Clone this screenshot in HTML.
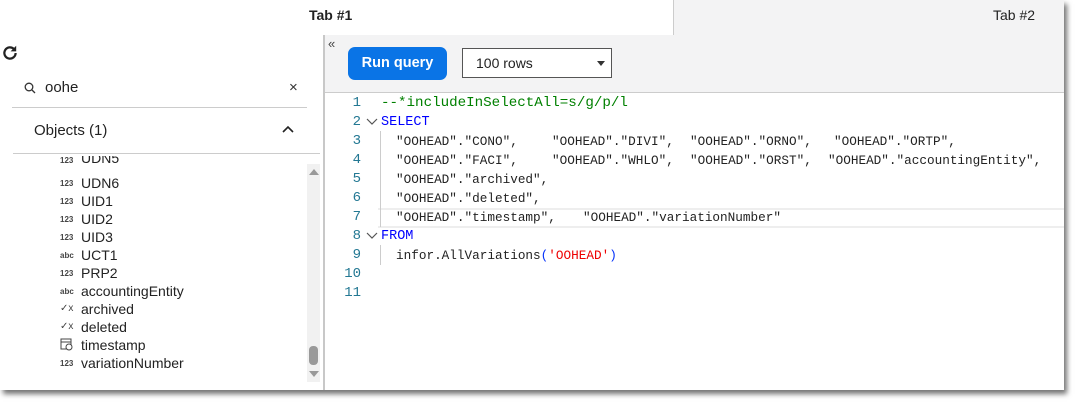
<!DOCTYPE html>
<html><head><style>
*{margin:0;padding:0;box-sizing:border-box}
body{width:1076px;height:402px;background:#fff;font-family:"Liberation Sans",sans-serif;position:relative;overflow:hidden;color:#222}
.abs{position:absolute}
.frame{left:0;top:0;width:1064px;height:390px;background:#fff;box-shadow:3px 4px 5px rgba(0,0,0,.55)}
.code{font-family:"Liberation Mono",monospace;font-size:12.7px;color:#222;white-space:pre;line-height:19px}
.ln{width:30px;text-align:right;color:#237893;font-family:"Liberation Mono",monospace;font-size:14px}
.item{left:81px;font-size:14px;color:#222}
.ic{left:60px;font-size:8px;color:#444;font-weight:bold}
</style></head><body>
<div class="abs frame"></div>
<div class="abs" style="left:673px;top:0;width:391px;height:35px;background:#f3f3f4;border-left:1px solid #ccc"></div>
<div class="abs" style="left:309px;top:7px;font-size:14px;font-weight:bold">Tab #1</div>
<div class="abs" style="left:993px;top:7px;font-size:14px">Tab #2</div>
<div class="abs" style="left:324px;top:35px;width:740px;height:58px;background:#f3f3f4;border-bottom:1px solid #ccc"></div>
<div class="abs" style="left:323px;top:35px;width:2px;height:355px;background:#c8c8c8"></div>
<div class="abs" style="left:328px;top:36px;font-size:13px;color:#444">«</div>
<div class="abs" style="left:348px;top:47px;width:99px;height:33px;background:#0a74e6;border-radius:7px;color:#fff;font-weight:bold;font-size:14.5px;text-align:center;line-height:33px">Run query</div>
<div class="abs" style="left:462px;top:48px;width:150px;height:30px;border:1px solid #555;background:#fff;font-size:14px;line-height:28px;padding-left:13px">100 rows</div>
<div class="abs" style="left:597px;top:61px;width:0;height:0;border-left:4px solid transparent;border-right:4px solid transparent;border-top:5px solid #333"></div>
<svg class="abs" style="left:1px;top:44px" width="18" height="18" viewBox="0 0 16 16"><path d="M13 8a5 5 0 1 1-1.5-3.6" fill="none" stroke="#222" stroke-width="2"/><path d="M13.5 1.5v5h-5z" fill="#222"/></svg>
<svg class="abs" style="left:24px;top:82px" width="12" height="12" viewBox="0 0 12 12"><circle cx="5" cy="5" r="3.8" fill="none" stroke="#333" stroke-width="1.3"/><path d="M8 8l3 3" stroke="#333" stroke-width="1.3"/></svg>
<div class="abs" style="left:45px;top:79px;font-size:15px">oohe</div>
<div class="abs" style="left:289px;top:79px;font-size:15px;color:#333">×</div>
<div class="abs" style="left:12px;top:107px;width:295px;height:1px;background:#ccc"></div>
<div class="abs" style="left:34px;top:122px;font-size:15px">Objects (1)</div>
<svg class="abs" style="left:282px;top:125px" width="12" height="8" viewBox="0 0 12 8"><path d="M1 7l5-5 5 5" fill="none" stroke="#222" stroke-width="1.6"/></svg>
<div class="abs" style="left:13px;top:153px;width:307px;height:1px;background:#ccc"></div>
<div class="abs" style="left:0;top:156px;width:307px;height:11px;overflow:hidden">
<div class="abs ic" style="top:0px">123</div><div class="abs item" style="top:-6px">UDN5</div></div>
<div class="abs ic" style="top:179px">123</div><div class="abs item" style="top:175px">UDN6</div>
<div class="abs ic" style="top:197px">123</div><div class="abs item" style="top:193px">UID1</div>
<div class="abs ic" style="top:215px">123</div><div class="abs item" style="top:211px">UID2</div>
<div class="abs ic" style="top:233px">123</div><div class="abs item" style="top:229px">UID3</div>
<div class="abs ic" style="top:251px">abc</div><div class="abs item" style="top:247px">UCT1</div>
<div class="abs ic" style="top:269px">123</div><div class="abs item" style="top:265px">PRP2</div>
<div class="abs ic" style="top:287px">abc</div><div class="abs item" style="top:283px">accountingEntity</div>
<div class="abs ic" style="top:303px;font-size:10px;font-weight:normal">✓x</div><div class="abs item" style="top:301px">archived</div>
<div class="abs ic" style="top:321px;font-size:10px;font-weight:normal">✓x</div><div class="abs item" style="top:319px">deleted</div>
<svg class="abs" style="left:60px;top:338px" width="13" height="13" viewBox="0 0 13 13"><rect x="1" y="1" width="10" height="10" fill="none" stroke="#444"/><path d="M1 4h10" stroke="#444"/><circle cx="9" cy="9" r="3" fill="#fff" stroke="#444"/></svg><div class="abs item" style="top:337px">timestamp</div>
<div class="abs ic" style="top:359px">123</div><div class="abs item" style="top:355px">variationNumber</div>
<div class="abs" style="left:307px;top:164px;width:13px;height:218px;background:#f1f1f1"></div>
<div class="abs" style="left:309px;top:169px;border-left:5px solid transparent;border-right:5px solid transparent;border-bottom:6px solid #999"></div>
<div class="abs" style="left:309px;top:371px;border-left:5px solid transparent;border-right:5px solid transparent;border-top:6px solid #999"></div>
<div class="abs" style="left:309px;top:346px;width:9px;height:19px;background:#999;border-radius:4px"></div>
<div class="abs" style="left:378px;top:208px;width:686px;height:20px;border-top:2px solid #eee;border-bottom:2px solid #eee"></div>
<div class="abs" style="left:380px;top:131px;width:1px;height:96px;background:#ccc"></div>
<div class="abs" style="left:380px;top:245px;width:1px;height:20px;background:#ccc"></div>
<div class="abs ln" style="left:331px;top:95px">1</div>
<div class="abs ln" style="left:331px;top:114px">2</div>
<div class="abs ln" style="left:331px;top:133px">3</div>
<div class="abs ln" style="left:331px;top:152px">4</div>
<div class="abs ln" style="left:331px;top:171px">5</div>
<div class="abs ln" style="left:331px;top:190px">6</div>
<div class="abs ln" style="left:331px;top:209px">7</div>
<div class="abs ln" style="left:331px;top:228px">8</div>
<div class="abs ln" style="left:331px;top:247px">9</div>
<div class="abs ln" style="left:331px;top:266px">10</div>
<div class="abs ln" style="left:331px;top:285px">11</div>
<svg class="abs" style="left:366px;top:118px" width="12" height="8"><path d="M1 1l5 5 5-5" fill="none" stroke="#555" stroke-width="1.2"/></svg>
<svg class="abs" style="left:366px;top:232px" width="12" height="8"><path d="M1 1l5 5 5-5" fill="none" stroke="#555" stroke-width="1.2"/></svg>
<div class="abs code" style="left:381px;top:94px;color:#008000;font-size:14.2px">--*includeInSelectAll=s/g/p/l</div>
<div class="abs code" style="left:381px;top:113px;color:#0000ff;font-size:13.5px">SELECT</div>
<div class="abs code" style="left:396px;top:132px">"OOHEAD"."CONO",</div>
<div class="abs code" style="left:552px;top:132px">"OOHEAD"."DIVI",</div>
<div class="abs code" style="left:690px;top:132px">"OOHEAD"."ORNO",</div>
<div class="abs code" style="left:834px;top:132px">"OOHEAD"."ORTP",</div>
<div class="abs code" style="left:396px;top:151px">"OOHEAD"."FACI",</div>
<div class="abs code" style="left:552px;top:151px">"OOHEAD"."WHLO",</div>
<div class="abs code" style="left:690px;top:151px">"OOHEAD"."ORST",</div>
<div class="abs code" style="left:828px;top:151px">"OOHEAD"."accountingEntity",</div>
<div class="abs code" style="left:396px;top:170px">"OOHEAD"."archived",</div>
<div class="abs code" style="left:396px;top:189px">"OOHEAD"."deleted",</div>
<div class="abs code" style="left:396px;top:208px">"OOHEAD"."timestamp",</div>
<div class="abs code" style="left:583px;top:208px">"OOHEAD"."variationNumber"</div>
<div class="abs code" style="left:381px;top:227px;color:#0000ff;font-size:13.5px">FROM</div>
<div class="abs code" style="left:396px;top:246px">infor.AllVariations<span style="color:#0431fa">(</span><span style="color:#e00">'OOHEAD'</span><span style="color:#0431fa">)</span></div>
</body></html>
